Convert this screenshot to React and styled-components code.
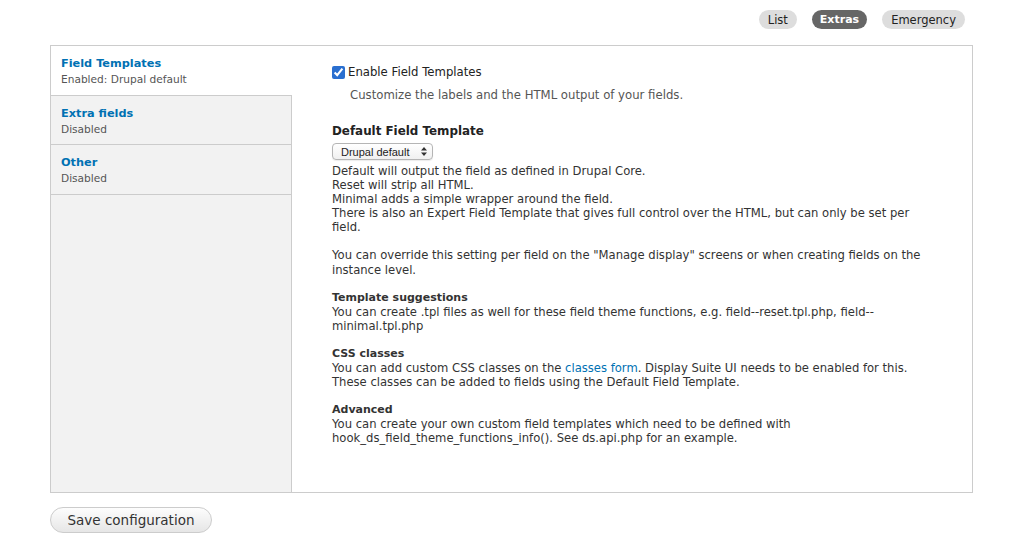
import React, { useState } from 'react';
import styled, { createGlobalStyle } from 'styled-components';

const GlobalStyle = createGlobalStyle`
  html, body {
    margin: 0;
    padding: 0;
    background: #fff;
  }
  body {
    font-family: "DejaVu Sans", "Liberation Sans", sans-serif;
    font-size: 11.6px;
    color: #333;
  }
`;

const Page = styled.div`
  padding: 0 51px 0 50px;
  width: 1024px;
  box-sizing: border-box;
`;

const TabsBar = styled.div`
  display: flex;
  justify-content: flex-end;
  gap: 15px;
  padding: 10px 8px 0 0;
  height: 45px;
  box-sizing: border-box;
`;

const Pill = styled.a`
  display: inline-flex;
  align-items: center;
  height: 19px;
  padding: 0 ${p => (p.$active ? '8px' : '9px')};
  border-radius: 10px;
  font-size: ${p => (p.$active ? '11px' : '11.5px')};
  font-weight: ${p => (p.$active ? 'bold' : 'normal')};
  background: ${p => (p.$active ? '#666' : '#ddd')};
  color: ${p => (p.$active ? '#fff' : '#222')};
  cursor: pointer;
`;

const Box = styled.div`
  display: flex;
  border: 1px solid #ccc;
  height: 448px;
  box-sizing: border-box;
`;

const Sidebar = styled.ul`
  list-style: none;
  margin: 0;
  padding: 0;
  width: 240px;
  flex: none;
  background: #f2f2f2;
  border-right: 1px solid #ccc;
`;

const TabItem = styled.li`
  height: 49.5px;
  box-sizing: border-box;
  padding: 10px 10px 0 10px;
  border-bottom: 1px solid #ccc;
  background: ${p => (p.$active ? '#fff' : 'transparent')};
  margin-right: ${p => (p.$active ? '-1px' : '0')};
  cursor: pointer;
`;

const TabTitle = styled.div`
  color: #0071b3;
  font-weight: bold;
  font-size: 11.3px;
  line-height: 15px;
`;

const TabSummary = styled.div`
  color: #555;
  font-size: 10.6px;
  line-height: 15px;
  margin-top: 1px;
`;

const Pane = styled.div`
  flex: 1;
  padding: 18px 40px 0 40px;
`;

const CheckRow = styled.label`
  display: flex;
  align-items: center;
  gap: 3px;
  font-size: 11.7px;
  color: #222;
  line-height: 16px;
`;

const Check = styled.input`
  margin: 0;
  width: 13px;
  height: 13px;
  accent-color: #2a6fd0;
`;

const Hint = styled.div`
  color: #555;
  font-size: 11.7px;
  line-height: 14px;
  padding-left: 18px;
  margin-top: 8px;
`;

const Heading = styled.div`
  font-weight: bold;
  font-size: 11.9px;
  color: #222;
  margin-top: 21px;
  line-height: 16px;
`;

const SelectWrap = styled.div`
  position: relative;
  display: inline-block;
  margin-top: 4px;
`;

const Select = styled.select`
  appearance: none;
  -webkit-appearance: none;
  display: block;
  width: 101px;
  height: 17px;
  font-family: "Liberation Sans", sans-serif;
  font-size: 11px;
  color: #222;
  border: 1px solid #b5b5b5;
  border-radius: 4px;
  background: linear-gradient(#fff, #f0f0f0);
  padding: 0 0 0 8px;
  box-shadow: 0 1px 1px rgba(0, 0, 0, 0.08);
`;

const Arrows = styled.svg`
  position: absolute;
  right: 6px;
  top: 4px;
  pointer-events: none;
`;

const Desc = styled.div`
  margin-top: 4px;
  line-height: 14.1px;
  color: #333;
`;

const Para = styled.p`
  margin: 0 0 14px 0;
`;

const Sub = styled.strong`
  display: block;
  font-weight: bold;
  font-size: 11px;
  color: #333;
`;

const Link = styled.a`
  color: #0071b3;
  text-decoration: none;
`;

const Footer = styled.div`
  padding-top: 14px;
`;

const SaveButton = styled.button`
  width: 162px;
  height: 26px;
  border: 1px solid #ccc;
  border-radius: 13px;
  background: linear-gradient(#fdfdfd, #e6e6e6);
  font-family: "DejaVu Sans", sans-serif;
  font-size: 13.5px;
  color: #333;
  padding: 0;
  cursor: pointer;
`;

const tabs = [
  { title: 'Field Templates', summary: 'Enabled: Drupal default' },
  { title: 'Extra fields', summary: 'Disabled' },
  { title: 'Other', summary: 'Disabled' },
];

export default function App() {
  const [active, setActive] = useState(0);
  const [enabled, setEnabled] = useState(true);

  return (
    <>
      <GlobalStyle />
      <Page>
        <TabsBar>
          <Pill>List</Pill>
          <Pill $active>Extras</Pill>
          <Pill>Emergency</Pill>
        </TabsBar>
        <Box>
          <Sidebar>
            {tabs.map((t, i) => (
              <TabItem key={t.title} $active={i === active} onClick={() => setActive(i)}>
                <TabTitle>{t.title}</TabTitle>
                <TabSummary>{t.summary}</TabSummary>
              </TabItem>
            ))}
          </Sidebar>
          <Pane>
            <CheckRow>
              <Check type="checkbox" checked={enabled} onChange={e => setEnabled(e.target.checked)} />
              Enable Field Templates
            </CheckRow>
            <Hint>Customize the labels and the HTML output of your fields.</Hint>
            <Heading>Default Field Template</Heading>
            <SelectWrap>
              <Select defaultValue="default">
                <option value="default">Drupal default</option>
                <option value="reset">Reset</option>
                <option value="minimal">Minimal</option>
              </Select>
              <Arrows width="6" height="9" viewBox="0 0 6 9">
                <path d="M0 3.5 L3 0 L6 3.5 Z M0 5.5 L3 9 L6 5.5 Z" fill="#333" />
              </Arrows>
            </SelectWrap>
            <Desc>
              <Para>
                Default will output the field as defined in Drupal Core.<br />
                Reset will strip all HTML.<br />
                Minimal adds a simple wrapper around the field.<br />
                There is also an Expert Field Template that gives full control over the HTML, but can only be set per field.
              </Para>
              <Para>
                You can override this setting per field on the "Manage display" screens or when creating fields on the instance level.
              </Para>
              <Para>
                <Sub>Template suggestions</Sub>
                You can create .tpl files as well for these field theme functions, e.g. field--reset.tpl.php, field--minimal.tpl.php
              </Para>
              <Para>
                <Sub>CSS classes</Sub>
                You can add custom CSS classes on the <Link href="#">classes form</Link>. Display Suite UI needs to be enabled for this.<br />
                These classes can be added to fields using the Default Field Template.
              </Para>
              <Para>
                <Sub>Advanced</Sub>
                You can create your own custom field templates which need to be defined with<br />
                hook_ds_field_theme_functions_info(). See ds.api.php for an example.
              </Para>
            </Desc>
          </Pane>
        </Box>
        <Footer>
          <SaveButton>Save configuration</SaveButton>
        </Footer>
      </Page>
    </>
  );
}
